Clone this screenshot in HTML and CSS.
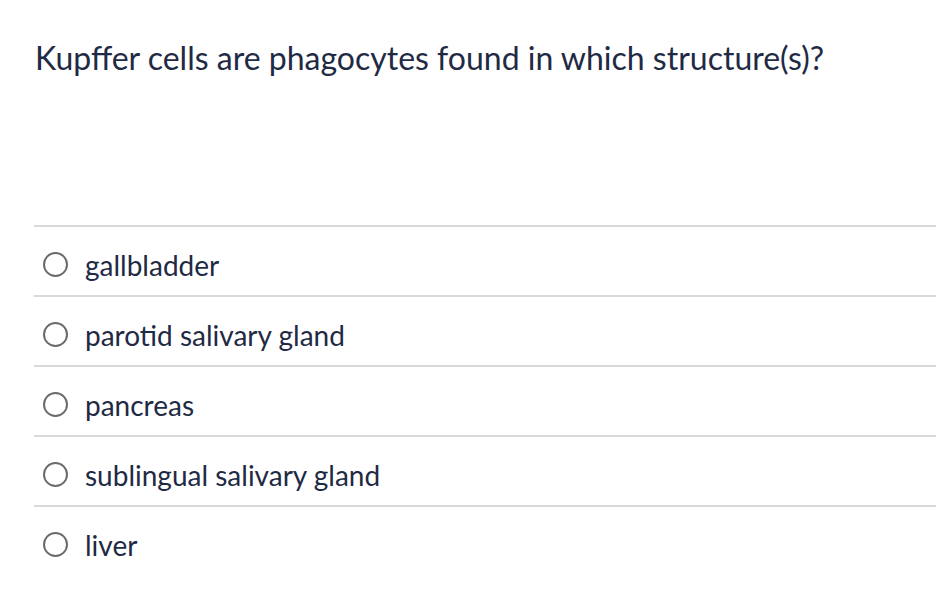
FILE: index.html
```html
<!DOCTYPE html>
<html>
<head>
<meta charset="utf-8">
<link rel="stylesheet" href="styles.css">
</head>
<body>
<div class="quiz">
  <h1 class="question">Kupffer cells are phagocytes found in which structure(s)?</h1>
  <ul class="answers">
    <li class="answer"><span class="radio"></span><span class="label">gallbladder</span></li>
    <li class="answer"><span class="radio"></span><span class="label">parotid salivary gland</span></li>
    <li class="answer"><span class="radio"></span><span class="label">pancreas</span></li>
    <li class="answer"><span class="radio"></span><span class="label">sublingual salivary gland</span></li>
    <li class="answer last"><span class="radio"></span><span class="label">liver</span></li>
  </ul>
</div>
</body>
</html>
```

FILE: styles.css
```css
html, body {
  margin: 0;
  padding: 0;
  background: #ffffff;
}
body {
  font-family: Lato, "Noto Sans", sans-serif;
  color: #1f2a44;
}
.quiz {
  padding-left: 34px;
}
.question {
  margin: 0;
  padding-top: 39px;
  height: 225px;
  box-sizing: border-box;
  font-size: 32px;
  font-weight: 400;
  line-height: 38px;
  padding-left: 1px;
}
.answers {
  list-style: none;
  margin: 0;
  padding: 0;
}
.answer {
  display: flex;
  align-items: center;
  height: 70px;
  border-top: 2px solid #d9d9d9;
  box-sizing: border-box;
  padding-left: 9px;
  padding-top: 7px;
}
.radio {
  width: 21px;
  height: 21px;
  border: 2px solid #6b6b6b;
  border-radius: 50%;
  flex: none;
  margin-right: 17px;
}
.label {
  font-size: 28px;
}
```
